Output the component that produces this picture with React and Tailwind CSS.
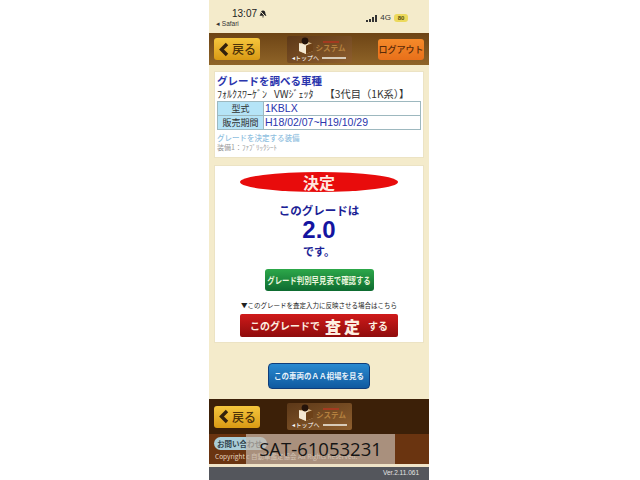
const jp = { fontFamily: '"Noto Sans CJK JP", "Liberation Sans", sans-serif' };
const latin = { fontFamily: '"Liberation Sans", sans-serif' };

const BoxIcon = () => (
  <svg width="18" height="17" viewBox="0 0 18 17">
    <path d="M9 4l7 3v7l-7 3-7-3V7z" fill="#d9b98a" />
    <path d="M9 8.5L16 6v8l-7 3z" fill="#6d4118" />
    <path d="M9 8.5L2 6v8l7 3z" fill="#f4e8d2" />
    <circle cx="8" cy="4" r="3.4" fill="#24130a" />
    <path d="M5 7l3 1.5L11 7" fill="none" stroke="#f4e8d2" strokeWidth="1" />
  </svg>
);

const BellIcon = () => (
  <svg width="8" height="8" viewBox="0 0 8 8">
    <path d="M4 .5c1.6 0 2.3 1.2 2.3 2.6 0 1.3.9 2 1.2 2.7H.5c.3-.7 1.2-1.4 1.2-2.7C1.7 1.7 2.4.5 4 .5zM3 6.6h2L4 7.8z" fill="#222" />
    <path d="M1 .8l6 6.4" stroke="#f4ebcb" strokeWidth="1" />
  </svg>
);

const BackButton = () => (
  <div className="w-[46px] h-[22px] rounded-[3px] flex items-center justify-center gap-[3px] bg-gradient-to-b from-[#f5c63c] to-[#d99a12]">
    <svg width="11" height="15" viewBox="0 0 11 15">
      <path d="M9 2L3.5 7.5 9 13" fill="none" stroke="#33210c" strokeWidth="3.4" />
    </svg>
    <span className="text-[12px] leading-none font-medium text-[#4d3208]">戻る</span>
  </div>
);

const TopLink = () => (
  <div className="w-[65px] h-[27px] rounded-[2px] bg-gradient-to-br from-[#5c3818] to-[#8f5f2e] flex flex-col items-center pt-[1px]">
    <div className="flex items-center gap-[1px] h-[17px] pl-[4px]">
      <BoxIcon />
      <div className="flex flex-col items-center mt-[2px]">
        <div className="w-[16px] h-[2px] bg-[#a33a20]"></div>
        <span className="text-[7.5px] leading-[9px] font-bold text-[#b5813f]">システム</span>
      </div>
    </div>
    <div className="flex items-center gap-[3px] mt-[1px]">
      <span className="text-[6px] leading-none text-white whitespace-nowrap">◂トップへ</span>
      <div className="w-[24px] h-[2px] bg-[#d8cbb8]"></div>
    </div>
  </div>
);

export default function App() {
  return (
    <div className="w-[640px] h-[480px] bg-white overflow-hidden" style={jp}>
      <div className="relative ml-[209px] w-[220px] h-[480px] flex flex-col bg-[#f4ebcb]">
        {/* status bar */}
        <div className="h-[33px] flex justify-between pl-[7px] pr-[21px] pt-[9px]">
          <div className="flex flex-col">
            <div className="pl-[16px] flex items-center gap-[2px] h-[10px]">
              <span className="text-[10px] leading-[10px] font-medium text-[#222]" style={latin}>13:07</span>
              <BellIcon />
            </div>
            <span className="text-[6.5px] leading-[7px] text-[#333] mt-[1px]" style={latin}>◂ Safari</span>
          </div>
          <div className="flex items-center gap-[3px] h-[18px]">
            <div className="flex items-end gap-[1px] h-[7px]">
              <div className="w-[2px] h-[2px] bg-[#333]"></div>
              <div className="w-[2px] h-[3px] bg-[#333]"></div>
              <div className="w-[2px] h-[5px] bg-[#333]"></div>
              <div className="w-[2px] h-[7px] bg-[#333]"></div>
            </div>
            <span className="text-[8px] leading-none text-[#333]" style={latin}>4G</span>
            <div className="w-[14px] h-[8px] rounded-[3px] bg-[#ecd95c] text-[6px] leading-[8px] font-bold text-center text-[#55500f]" style={latin}>80</div>
          </div>
        </div>

        {/* header */}
        <div className="h-[32px] bg-gradient-to-b from-[#6d4415] to-[#8f6428] flex items-center justify-between px-[5px]">
          <BackButton />
          <TopLink />
          <div className="w-[46px] h-[21px] rounded-[3px] bg-gradient-to-b from-[#f58a2a] to-[#e8701a] text-[9px] leading-[21px] font-medium text-center text-[#5a2a08] whitespace-nowrap">ログアウト</div>
        </div>

        {/* vehicle card */}
        <div className="mx-[5px] mt-[6px] h-[87px] bg-white border border-[#ece3c4] px-[2px] pt-[2px]">
          <div className="text-[10.5px] leading-[13px] font-bold text-[#2a35ad]">グレードを調べる車種</div>
          <div className="flex gap-[7px] text-[10px] leading-[13px] text-[#333] whitespace-nowrap">
            <span>ﾌｫﾙｸｽﾜｰｹﾞﾝ</span>
            <span>VWｼﾞｪｯﾀ</span>
            <span className="ml-[4px] text-[10.25px]">【3代目（1K系）】</span>
          </div>
          <div className="mt-[1px] w-[204px] border border-[#9db8bf] text-[9px] leading-[13px]">
            <div className="flex border-b border-[#9db8bf]">
              <div className="w-[46px] bg-[#b5e4f7] text-center text-[#333] border-r border-[#9db8bf]">型式</div>
              <div className="pl-[1px] text-[10.5px] text-[#2a35ad]" style={latin}>1KBLX</div>
            </div>
            <div className="flex">
              <div className="w-[46px] bg-[#b5e4f7] text-center text-[#333] border-r border-[#9db8bf]">販売期間</div>
              <div className="pl-[1px] text-[10.5px] text-[#2a35ad] whitespace-nowrap" style={latin}>H18/02/07~H19/10/29</div>
            </div>
          </div>
          <div className="mt-[3px] text-[7.5px] leading-[10px] font-medium text-[#8fc0e0]">グレードを決定する装備</div>
          <div className="text-[7px] leading-[9px] text-[#999]">装備1：ﾌｧﾌﾞﾘｯｸｼｰﾄ</div>
        </div>

        {/* result card */}
        <div className="mx-[5px] mt-[7px] h-[178px] bg-white border border-[#ece3c4] flex flex-col items-center pt-[6px]">
          <div className="w-[158px] h-[20px] rounded-[50%] bg-[#e80c0c] text-[16px] leading-[20px] font-bold text-center text-[#ffe8e0]">決定</div>
          <div className="mt-[11px] text-[11.5px] leading-[14px] font-bold text-[#1c1f96]">このグレードは</div>
          <div className="-mt-[1px] text-[24px] leading-[27px] font-bold text-[#1414a0]" style={latin}>2.0</div>
          <div className="mt-[1px] text-[11px] leading-[14px] font-bold text-[#1c1f96]">です。</div>
          <div className="mt-[11px] w-[109px] h-[22px] rounded-[3px] bg-gradient-to-b from-[#2da84a] to-[#0d6b30] flex items-center justify-center">
            <span className="inline-block scale-x-[0.82] text-[9px] leading-none font-bold text-[#e8f5dc] whitespace-nowrap">グレード判別早見表で確認する</span>
          </div>
          <div className="mt-[10px] text-[6.5px] leading-[9px] text-[#222] whitespace-nowrap">▼このグレードを査定入力に反映させる場合はこちら</div>
          <div className="mt-[4px] w-[158px] h-[23px] rounded-[2px] bg-gradient-to-b from-[#d01a1a] to-[#8f0c0c] flex items-center justify-center gap-[5px] font-bold text-[#fdeee0] whitespace-nowrap">
            <span className="text-[10px] leading-none">このグレードで</span>
            <span className="text-[16px] leading-none tracking-[3px] font-black">査定</span>
            <span className="text-[10px] leading-none">する</span>
          </div>
        </div>

        {/* market price button */}
        <div className="mt-[20px] mx-auto w-[102px] h-[26px] rounded-[4px] border border-[#0f3d7a] bg-gradient-to-b from-[#2a8ad0] to-[#0f5aa0] text-[7.5px] leading-[24px] font-bold text-center text-[#e8f2fa] whitespace-nowrap">この車両のＡＡ相場を見る</div>

        {/* footer */}
        <div className="mt-[10px] h-[35px] bg-[#3c2008] flex items-center pl-[5px] gap-[27px]">
          <BackButton />
          <TopLink />
        </div>
        <div className="h-[30px] bg-[#6a3410] pl-[5px] pt-[3px]">
          <div className="w-[53px] h-[13px] rounded-full bg-[#a9cdd8] text-[7.5px] leading-[13px] font-bold pl-[3px] text-[#30424c] whitespace-nowrap">お問い合わせ</div>
          <div className="mt-[2px] pl-[1px] text-[6.5px] leading-[9px] text-[#e8d8c0] whitespace-nowrap">Copyright c 自動車鑑定協会 All Rights Reserved.</div>
        </div>
        <div className="h-[3px] bg-[#f0e4c8]"></div>
        <div className="flex-1 bg-[#54565c] text-right pr-[10px] text-[6.5px] leading-[12px] text-[#e4e4e4]" style={latin}>Ver.2.11.061</div>

        {/* watermark */}
        <div className="absolute left-[37px] top-[434px] w-[149px] h-[30px] bg-[#c4b8ac]/70 text-[18.5px] leading-[29px] font-medium text-center text-[#151515] whitespace-nowrap" style={{ fontFamily: '"Open Sans", sans-serif' }}>SAT-61053231</div>
      </div>
    </div>
  );
}
